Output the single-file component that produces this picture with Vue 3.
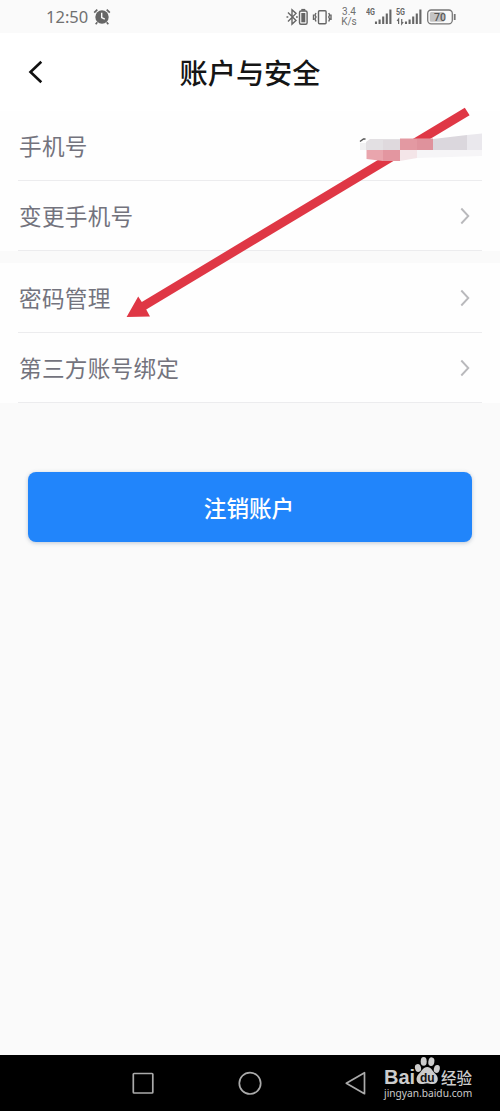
<template>
  <div class="phone">
    <header class="status-bar">
      <span class="time">12:50</span>
      <svg class="alarm" width="18" height="18" viewBox="0 0 18 18">
        <circle cx="9" cy="9" r="6.7" fill="#666" />
        <path d="M1.2 4.6 4.3 1.6M13.7 1.6l3.1 3M4.3 14.3l-1.6 2M13.7 14.3l1.6 2" stroke="#666" stroke-width="1.7" />
        <path d="M8.7 4.8v4.7l3.1 1.6" fill="none" stroke="#fafafa" stroke-width="1.4" />
      </svg>

      <svg class="devices" width="48" height="20" viewBox="0 0 48 20">
        <g fill="none" stroke="#666" stroke-width="1.4">
          <path d="m2 5.500 8 8-4 3.600V2.800l4 3.600-8 8" />
          <path d="M.5 10h1.800M10 10h1.800" />
          <rect x="13.500" y="4" width="7.600" height="13.200" rx="1.500" />
          <path d="M15.300 2.800h4" stroke-width="1.800" />
          <rect x="32.500" y="3.700" width="7.600" height="13" rx="1" />
          <path d="m30 6-1 2 1 2-1 2 1 2.500M27.500 7.500v5.500M42.700 6l1 2-1 2 1 2-1 2.500M45 7.500v5.500" />
        </g>
        <rect x="15.300" y="6" width="4" height="9.300" fill="#666" />
      </svg>
      <span class="speed"><span>3.4</span><span>K/s</span></span>
      <svg v-for="net in networks" :key="net" class="signal" width="28" height="20" viewBox="0 0 28 20">
        <text x="0" y="8" textLength="9" lengthAdjust="spacingAndGlyphs">{{ net }}</text>
        <path d="M10 14.500V17M13.600 12.500V17M17.200 9.500V17M20.800 6.500V17M24.400 2.500V17" stroke="#666" stroke-width="2.100" />
        <path v-if="net === '5G'" d="M2.600 17v-5l-1.500 2M5.700 12v5l1.500-2" fill="none" stroke="#666" stroke-width="1.200" />
      </svg>
      <svg class="battery" width="30" height="16" viewBox="0 0 30 16">
        <rect x=".7" y="1" width="24.600" height="13.800" rx="3.500" fill="none" stroke="#777" stroke-width="1.300" />
        <rect x="2.800" y="3" width="14.500" height="9.800" rx="1.500" fill="#c3c3c3" />
        <path d="M27.700 5v6" stroke="#777" stroke-width="1.800" />
        <text x="13" y="11.700" text-anchor="middle">70</text>
      </svg>
    </header>

    <div class="title-bar">
      <svg class="back" width="16" height="24" viewBox="0 0 16 24">
        <path d="M13.300 1.700 2.500 12l10.800 10.300" fill="none" stroke="#111" stroke-width="2.600" />
      </svg>
      <h1>账户与安全</h1>
    </div>

    <section v-for="(group, i) in groups" :key="i" class="group">
      <div v-for="item in group" :key="item.label" class="row">
        <span>{{ item.label }}</span>
        <svg v-if="item.link" class="chevron" width="10" height="18" viewBox="0 0 10 18">
          <path d="m1.300 1.500 7 7.500-7 7.500" fill="none" stroke="#b9b9bc" stroke-width="1.900" />
        </svg>
      </div>
    </section>

    <button class="cancel-button">注销账户</button>

    <!-- стрелка и замазанный номер -->
    <svg class="marks" width="500" height="420" viewBox="0 0 500 420">
      <path d="m464.800 107.800 4.800 7.400-323.400 194.300 3.800 7-23.400.5 11.600-20.500 3.600 5.500z" fill="#df3745" />
      <path d="m360 141.500 3.500-2.500h2" fill="none" stroke="#555" stroke-width="1.500" />
      <path d="M360 143h7v7h-7z" fill="#f1f1f2" />
      <path d="m366 142 4-3h30v11h-34z" fill="#e3e0e3" />
      <path d="M383 140h17v10h-17z" fill="#dfd9dd" />
      <path d="M400 138.500h33V150h-33z" fill="#e399a2" />
      <path d="M417 139h16v11h-16z" fill="#df929c" />
      <path d="m433 139 34-4v15h-34z" fill="#dbd7dd" />
      <path d="m467 135 15-1.500V150h-15z" fill="#eae8ed" />
      <path d="M366.500 150H383v11l-16.500-2z" fill="#e9a5ad" />
      <path d="M383 150h17v11h-17z" fill="#e396a0" />
      <path d="M400 150h17v8l-17 3z" fill="#f4e5e8" />
      <path d="M417 150h65v6l-65 2z" fill="#f6f5f7" />
    </svg>

    <nav class="nav-bar">
      <svg width="500" height="56" viewBox="0 0 500 56">
        <g fill="none" stroke="#aaa" stroke-width="1.700" stroke-linejoin="round">
          <rect x="133.300" y="18.500" width="19.500" height="19.500" rx=".8" />
          <circle cx="250" cy="28.300" r="10.700" />
          <path d="M364.500 17.700v21l-18.200-10.500z" />
        </g>
      </svg>
      <div class="watermark">
        <div class="brand">
          <span class="bai">Bai</span>
          <svg width="27" height="30" viewBox="0 0 27 30">
            <g fill="#ccc">
              <ellipse cx="4" cy="12" rx="3" ry="4" transform="rotate(-15 4 12)" />
              <ellipse cx="9.700" cy="5.400" rx="3" ry="4.300" />
              <ellipse cx="17.300" cy="5.600" rx="3" ry="4.300" transform="rotate(10 17 6)" />
              <ellipse cx="22.800" cy="13" rx="2.900" ry="4" transform="rotate(15 23 13)" />
              <path d="M13.300 11c4 0 5.300 4.500 8.200 7 4 3.700 2.500 10-2.500 10-3 0-3.500-.8-6-.8s-3 .8-5.500.8c-5.500 0-6.500-6.500-2.500-10.200 2.800-2.400 4-6.800 8.300-6.800z" />
            </g>
            <text x="13.300" y="25.500" text-anchor="middle">du</text>
          </svg>
          <span class="jingyan">经验</span>
        </div>
        <div class="site">jingyan.baidu.com</div>
      </div>
    </nav>
  </div>
</template>

<script setup>
const networks = ['4G', '5G'];

const groups = [
  [
    { label: '手机号', link: false },
    { label: '变更手机号', link: true },
  ],
  [
    { label: '密码管理', link: true },
    { label: '第三方账号绑定', link: true },
  ],
];
</script>

<style>
body {
  margin: 0;
}
</style>

<style scoped>
.phone {
  position: relative;
  display: flex;
  flex-direction: column;
  width: 500px;
  height: 1111px;
  overflow: hidden;
  background: #fafafa;
  font-family: KaiTi, 'Noto Sans CJK SC', sans-serif;
}

svg {
  display: block;
  flex-shrink: 0;
}

.status-bar {
  display: flex;
  align-items: center;
  box-sizing: border-box;
  height: 33px;
  padding: 1px 0 0 46px;
  color: #707070;
  font-family: 'Noto Sans', sans-serif;
}

.time {
  width: 43px;
  font-size: 16.5px;
  line-height: 20px;
  white-space: nowrap;
}

.alarm {
  margin-left: 4px;
}

.devices {
  margin-left: 175px;
}

.speed {
  display: flex;
  flex-direction: column;
  align-items: center;
  width: 18px;
  margin-left: 6px;
  margin-right: 8px;
  font-family: Roboto, sans-serif;
  font-size: 10.5px;
  line-height: 10px;
}

.speed span {
  height: 10px;
  font-size: 10px;
}

.signal {
  margin-right: 2px;
}

.signal text {
  fill: #666;
  font: bold 8.5px Roboto, sans-serif;
}

.battery {
  margin-left: 1px;
}

.battery text {
  fill: #555;
  font: 500 10.5px Roboto, sans-serif;
}

.title-bar {
  display: grid;
  grid-template-columns: 80px 1fr 80px;
  align-items: center;
  height: 78px;
  background: #fff;
}

.back {
  margin-left: 28px;
}

h1 {
  margin: 0;
  color: #151515;
  font-size: 28.2px;
  font-weight: 500;
  line-height: 40px;
  text-align: center;
}

.group {
  padding: 0 18px;
  background: #fefefe;
}

.group + .group {
  margin-top: 12px;
}

.row {
  display: flex;
  align-items: center;
  justify-content: space-between;
  box-sizing: border-box;
  height: 70px;
  padding: 0 12px 0 1px;
  border-bottom: 1px solid #ececee;
  color: #73737d;
  font-size: 22.6px;
  letter-spacing: 0.3px;
  line-height: 32px;
}

.cancel-button {
  height: 70px;
  margin: 69px 28px 0;
  padding: 0 2px 0 0;
  border: 0;
  border-radius: 8px;
  background: #2185fb;
  box-shadow: 0 1px 4px rgba(50, 80, 120, 0.3);
  color: #fff;
  font-family: inherit;
  font-size: 22.6px;
  font-weight: 500;
}

.marks {
  position: absolute;
  top: 0;
  left: 0;
  pointer-events: none;
}

.nav-bar {
  position: relative;
  height: 56px;
  margin-top: auto;
  background: #000;
}

.watermark {
  position: absolute;
  top: 2px;
  left: 384px;
  color: #ccc;
}

.brand {
  display: flex;
  align-items: flex-end;
  height: 29px;
}

.bai {
  width: 30px;
  font: bold 20px/18px 'Liberation Sans', sans-serif;
}

.brand text {
  fill: #111;
  font: bold 12px 'Liberation Sans', sans-serif;
}

.jingyan {
  font-size: 15.5px;
  font-weight: 500;
  line-height: 18px;
  white-space: nowrap;
}

.site {
  margin-top: 1px;
  font: 10.2px/12px 'Noto Sans', sans-serif;
  white-space: nowrap;
}
</style>
